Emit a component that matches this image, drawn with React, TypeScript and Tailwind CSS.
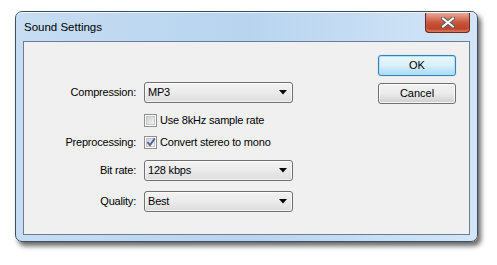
import React from "react";

const font = { fontFamily: '"Liberation Sans", Arial, sans-serif' };

function ComboBox({ value }: { value: string }) {
  return (
    <div className="flex h-[21px] w-[149px] items-center justify-between rounded-[3px] border border-[#707070] bg-gradient-to-b from-[#f3f3f3] via-[#ebebeb] to-[#dcdcdc] pl-[3px] pr-[5px] shadow-[inset_0_0_0_1px_rgba(255,255,255,0.7)]">
      <span className="text-[11px] leading-none tracking-[-0.2px] text-black">{value}</span>
      <svg width="8" height="5" viewBox="0 0 8 5">
        <path d="M0 0h8L4 4.5z" fill="#000" />
      </svg>
    </div>
  );
}

function CheckBox({ checked, label }: { checked?: boolean; label: string }) {
  return (
    <div className="flex items-center gap-[3px]">
      <div className="flex h-[13px] w-[13px] items-center justify-center border border-[#8e8f8f] bg-white">
        <div className="relative h-[9px] w-[9px] border border-[#c6c6c6] bg-gradient-to-br from-[#cbcfd5] to-[#f6f6f6]">
          {checked && (
            <svg className="absolute -left-[1px] -top-[2px]" width="10" height="10" viewBox="0 0 10 10">
              <path d="M1.5 5.2 L4 8 L8.8 1.5" fill="none" stroke="#4a5f97" strokeWidth="1.8" />
            </svg>
          )}
        </div>
      </div>
      <span className="text-[11px] leading-none tracking-[-0.2px] text-black">{label}</span>
    </div>
  );
}

function Row({ label, children, className }: { label?: string; children: React.ReactNode; className?: string }) {
  return (
    <div className={`flex h-[21px] items-center ${className ?? ""}`}>
      <div className="w-[112px] text-right text-[11px] leading-none tracking-[-0.2px] text-black">{label}</div>
      <div className="ml-[8px]">{children}</div>
    </div>
  );
}

function Button({ label, primary }: { label: string; primary?: boolean }) {
  return (
    <div
      className={`flex h-[21px] w-[78px] items-center justify-center rounded-[3px] border text-[11px] leading-none text-black ${
        primary
          ? "border-[#3c7fb1] bg-gradient-to-b from-[#eaf6fd] via-[#d9f0fc] to-[#a7d9f5] shadow-[inset_0_0_0_1px_#a9e4fc,0_0_1px_#5fbdec]"
          : "border-[#707070] bg-gradient-to-b from-[#f2f2f2] via-[#ebebeb] to-[#cfcfcf] shadow-[inset_0_0_0_1px_rgba(255,255,255,0.8)]"
      }`}
    >
      {label}
    </div>
  );
}

export default function App() {
  return (
    <div className="h-[265px] w-[497px] bg-white pl-[15px] pt-[11px]" style={font}>
      <div className="flex h-[231px] w-[463px] flex-col rounded-[7px] border border-[#3e4e5e] bg-gradient-to-r from-[#c6ddf3] via-[#b8d4ef] to-[#d3e6f8] shadow-[3px_4px_5px_rgba(0,0,0,0.6)]">
        <div className="flex h-[29px] items-start justify-between rounded-t-[6px] border-t border-white/70 pl-[8px] pr-[7px]">
          <span className="pt-[9px] text-[11.5px] leading-none text-black">Sound Settings</span>
          <div className="flex h-[20px] w-[45px] items-center justify-center rounded-b-[4px] border border-t-0 border-[#6b2a20] bg-gradient-to-b from-[#e9a796] via-[#c9553d] to-[#b23a22] shadow-[inset_0_-2px_2px_#d9775b]">
            <svg width="14" height="11" viewBox="0 0 14 11">
              <path d="M2 1.5 L12 9.5 M12 1.5 L2 9.5" stroke="#5a5a5a" strokeWidth="4" strokeLinecap="square" />
              <path d="M2 1.5 L12 9.5 M12 1.5 L2 9.5" stroke="#ffffff" strokeWidth="2" strokeLinecap="square" />
            </svg>
          </div>
        </div>
        <div className="mx-[7px] mb-[6px] flex h-[194px] border border-[#6c7d92] bg-[#f0f0f0]">
          <div className="flex flex-col pt-[40px]">
            <Row label="Compression:">
              <ComboBox value="MP3" />
            </Row>
            <Row className="mt-[7px]">
              <CheckBox label="Use 8kHz sample rate" />
            </Row>
            <Row label="Preprocessing:" className="mt-[1px]">
              <CheckBox checked label="Convert stereo to mono" />
            </Row>
            <Row label="Bit rate:" className="mt-[7px]">
              <ComboBox value="128 kbps" />
            </Row>
            <Row label="Quality:" className="mt-[10px]">
              <ComboBox value="Best" />
            </Row>
          </div>
          <div className="ml-auto mr-[13px] flex flex-col gap-[7px] pt-[13px]">
            <Button label="OK" primary />
            <Button label="Cancel" />
          </div>
        </div>
      </div>
    </div>
  );
}
